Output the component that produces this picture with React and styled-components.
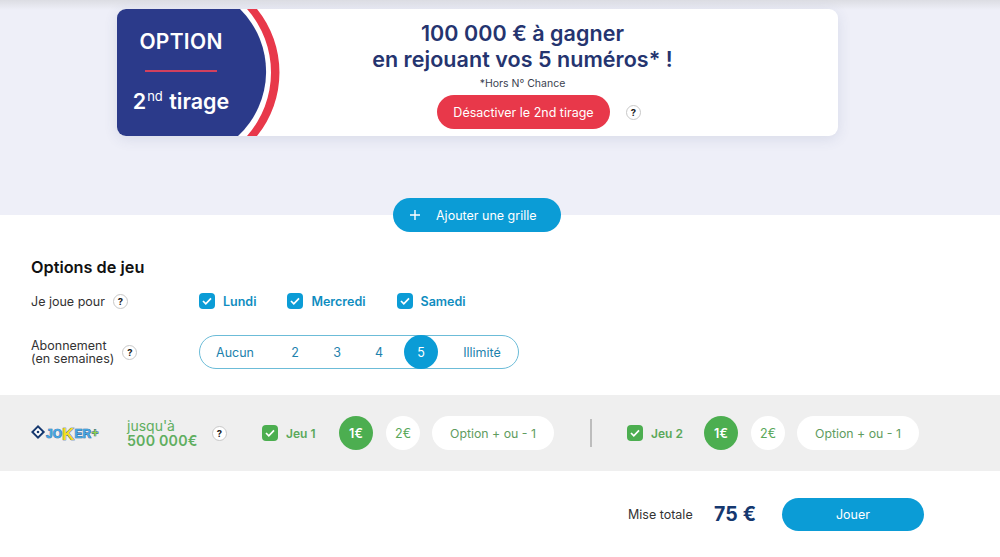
import React from "react";
import styled, { createGlobalStyle } from "styled-components";

const Global = createGlobalStyle`
  html, body { margin: 0; padding: 0; background: #fff; }
  body { font-family: Inter, "Open Sans", "Liberation Sans", sans-serif; width: 1000px; height: 557px; overflow: hidden; }
  * { box-sizing: border-box; }
`;

const Page = styled.div`display: flex; flex-direction: column; width: 1000px; height: 557px;`;
const Hero = styled.section`
  height: 215px; flex: none; padding: 9px 162px 0 117px;
  background: linear-gradient(#dcdde3 0, #eeeff8 10px, #eeeff8 100%);
`;
const Card = styled.div`
  position: relative; display: flex; height: 127px; border-radius: 9px; background: #fff;
  box-shadow: 0 3px 14px rgba(60, 70, 120, .12); overflow: hidden;
`;
const BadgeArt = styled.svg`position: absolute; left: 0; top: 0;`;
const Badge = styled.div`
  position: relative; width: 128px; margin-right: 35px; flex: none; display: flex; flex-direction: column;
  align-items: center; color: #fff; padding-top: 21px;
`;
const BadgeTitle = styled.div`font-size: 21px; font-weight: 600; line-height: 24px; letter-spacing: .3px;`;
const BadgeLine = styled.div`width: 72px; height: 2px; background: #d2405e; margin: 16px 0;`;
const BadgeSub = styled.div`
  font-size: 21.5px; font-weight: 600; line-height: 26px; white-space: nowrap;
  sup { font-size: 13px; font-weight: 400; line-height: 0; vertical-align: 8px; margin: 0 1px; }
`;
const CardBody = styled.div`flex: 1; display: flex; flex-direction: column; align-items: center; padding-top: 11px; margin-right: 73px;`;
const Headline = styled.h2`
  margin: 0; font-size: 21.5px; line-height: 26px; font-weight: 600; color: #25346f; text-align: center; letter-spacing: .05px; white-space: nowrap;
`;
const Note = styled.div`font-size: 10.5px; color: #3a3f50; line-height: 12px; margin-top: 6px;`;
const CardActions = styled.div`display: flex; align-items: center; margin-top: 5px; margin-right: -33px;`;
const RedButton = styled.button`
  width: 173px; height: 34px; border: 0; border-radius: 17px; background: #e8384a; color: #fff;
  font: 400 12.5px Inter, sans-serif; padding: 0;
`;
const HelpCircle = styled.span`
  display: inline-flex; align-items: center; justify-content: center; flex: none;
  width: 15px; height: 15px; border-radius: 50%; border: 1px solid #c8c8c8; background: #fff;
  color: #222; font-size: 9.5px; font-weight: 700; margin-left: ${p => p.$ml || 0}px;
`;
const AddWrap = styled.div`display: flex; justify-content: center; margin-top: -17px; padding-right: 46px; height: 34px; flex: none; position: relative;`;
const AddButton = styled.button`
  width: 168px; height: 34px; border: 0; border-radius: 17px; background: #0b9cd6; color: #fff;
  display: flex; align-items: center; padding: 0 0 0 16px; gap: 15px; font: 400 12.5px Inter, sans-serif;
`;
const Options = styled.section`padding: 26px 31px 0; height: 163px; flex: none;`;
const OptTitle = styled.h3`margin: 0 0 13px; font-size: 16.3px; line-height: 18px; font-weight: 600; color: #111;`;
const Row = styled.div`display: flex; align-items: center; height: ${p => p.$h}px; margin-bottom: ${p => p.$mb || 0}px;`;
const Label = styled.div`
  width: 168px; flex: none; display: flex; align-items: center; font-size: 12.5px; line-height: 13px; color: #333;
`;
const Checks = styled.div`display: flex; gap: 31px;`;
const Check = styled.label`
  display: flex; align-items: center; gap: 8px; font-size: 12.5px; font-weight: 600;
  color: ${p => p.$c};
`;
const Box = styled.span`
  width: 16px; height: 16px; border-radius: 4px; background: ${p => p.$c}; display: flex; align-items: center; justify-content: center; flex: none;
`;
const Pill = styled.div`
  width: 320px; height: 34px; border: 1px solid #6cbcd8; border-radius: 17px; display: flex; align-items: center;
  padding-left: 16px;
`;
const PillItem = styled.span`
  display: flex; align-items: center; justify-content: center; height: 34px; font-size: 12.5px; font-weight: 400;
  color: #1d82ad; width: ${p => p.$w}px; flex: none; margin-left: ${p => p.$ml || 0}px; white-space: nowrap;
  ${p => p.$on && "background:#0b9cd6;color:#fff;border-radius:50%;"}
`;
const JokerBar = styled.section`
  height: 76px; flex: none; background: #efefef; display: flex; align-items: center; padding-left: 31px;
`;
const JokerLogo = styled.svg`flex: none;`;
const LogoText = styled.text`
  font-family: "Liberation Sans", sans-serif; font-weight: 700; paint-order: stroke;
  stroke: #1b4c8f; stroke-width: .7px;
`;
const Prize = styled.div`
  width: 84px; margin-left: 26px; color: #5fae60; font-size: 14px; line-height: 15px; flex: none;
  strong { display: block; font-weight: 600; font-size: 14.2px; letter-spacing: .2px; white-space: nowrap; }
`;
const Game = styled.div`display: flex; align-items: center; margin-left: ${p => p.$ml}px;`;
const JeuLabel = styled.span`font-size: 12px; font-weight: 600; color: #5aa85a; margin-left: 8px; width: 41px; white-space: nowrap;`;
const Coin = styled.span`
  width: 34px; height: 34px; border-radius: 50%; flex: none; display: flex; align-items: center; justify-content: center;
  font-size: 12.5px; font-weight: ${p => p.$on ? 600 : 400};
  background: ${p => p.$on ? "#4cae50" : "#fff"}; color: ${p => p.$on ? "#fff" : "#5aa85a"};
  margin-left: ${p => p.$ml}px;
`;
const OptionBtn = styled.span`
  width: 122px; height: 34px; border-radius: 17px; background: #fff; color: #5f9c60; font-size: 12.3px; font-weight: 400;
  display: flex; align-items: center; justify-content: center; margin-left: 12px; flex: none;
`;
const Divider = styled.span`width: 2px; height: 28px; background: #bdbdbd; margin-left: 36px; flex: none;`;
const Footer = styled.footer`
  height: 86px; flex: none; display: flex; align-items: center; padding: 0 76px 0 628px;
`;
const Stake = styled.span`font-size: 12.5px; color: #333; width: 86px; flex: none;`;
const Total = styled.span`font-size: 19.5px; font-weight: 700; color: #15386f; width: 68px; flex: none; letter-spacing: .2px;`;
const Play = styled.button`
  width: 142px; height: 33px; border: 0; border-radius: 17px; background: #0b9cd6; color: #fff; font: 400 12.5px Inter, sans-serif;
`;

const Tick = () => (
  <svg width="10" height="8" viewBox="0 0 10 8" fill="none"><path d="M1 4l2.8 2.8L9 1.4" stroke="#fff" strokeWidth="1.7" /></svg>
);

export default function App() {
  return (
    <Page>
      <Global />
      <Hero>
        <Card>
          <BadgeArt width="165" height="127" viewBox="0 0 165 127">
            <path d="M130 0H140A101 101 0 0 1 140 127H130A96 96 0 0 0 130 0Z" fill="#e8384a" />
            <path d="M0 0H123A88 88 0 0 1 121 127H0Z" fill="#2b3a8a" />
          </BadgeArt>
          <Badge>
            <BadgeTitle>OPTION</BadgeTitle>
            <BadgeLine />
            <BadgeSub>2<sup>nd</sup> tirage</BadgeSub>
          </Badge>
          <CardBody>
            <Headline>100 000 € à gagner<br />en rejouant vos 5 numéros* !</Headline>
            <Note>*Hors N° Chance</Note>
            <CardActions>
              <RedButton>Désactiver le 2nd tirage</RedButton>
              <HelpCircle $ml={16}>?</HelpCircle>
            </CardActions>
          </CardBody>
        </Card>
      </Hero>
      <AddWrap>
        <AddButton>
          <svg width="12" height="12" viewBox="0 0 12 12"><path d="M6 1v10M1 6h10" stroke="#fff" strokeWidth="1.4" /></svg>
          Ajouter une grille
        </AddButton>
      </AddWrap>
      <Options>
        <OptTitle>Options de jeu</OptTitle>
        <Row $h={24} $mb={22}>
          <Label>Je joue pour<HelpCircle $ml={8}>?</HelpCircle></Label>
          <Checks>
            {["Lundi", "Mercredi", "Samedi"].map(d => (
              <Check key={d} $c="#0f8dc0"><Box $c="#0b9cd6"><Tick /></Box>{d}</Check>
            ))}
          </Checks>
        </Row>
        <Row $h={34}>
          <Label><span>Abonnement<br />(en semaines)</span><HelpCircle $ml={8}>?</HelpCircle></Label>
          <Pill>
            <PillItem $w={38}>Aucun</PillItem>
            <PillItem $w={42} $ml={20}>2</PillItem>
            <PillItem $w={42}>3</PillItem>
            <PillItem $w={42}>4</PillItem>
            <PillItem $w={34} $ml={4} $on>5</PillItem>
            <PillItem $w={38} $ml={25}>Illimité</PillItem>
          </Pill>
        </Row>
      </Options>
      <JokerBar>
        <JokerLogo width="70" height="20" viewBox="0 0 70 20" role="img" aria-label="Joker+">
          <rect x="3" y="5" width="8" height="8" transform="rotate(45 7 9)" fill="#fff" stroke="#17396f" strokeWidth="2" />
          <circle cx="7" cy="9" r="1.3" fill="#17396f" />
          <LogoText x="15" y="15" fontSize="12" fill="#45a6e0">JO</LogoText>
          <LogoText x="31" y="16.5" fontSize="17" fill="#f2dc1e">K</LogoText>
          <LogoText x="43.5" y="15" fontSize="12" fill="#45a6e0">ER</LogoText>
          <LogoText x="60.5" y="14" fontSize="12" fill="#8fd14a">+</LogoText>
        </JokerLogo>
        <Prize>jusqu'à<strong>500 000€</strong></Prize>
        <HelpCircle $ml={1}>?</HelpCircle>
        <Game $ml={35}>
          <Box $c="#4cae50"><Tick /></Box>
          <JeuLabel>Jeu 1</JeuLabel>
          <Coin $on $ml={12}>1€</Coin>
          <Coin $ml={13}>2€</Coin>
          <OptionBtn>Option + ou - 1</OptionBtn>
        </Game>
        <Divider />
        <Game $ml={35}>
          <Box $c="#4cae50"><Tick /></Box>
          <JeuLabel>Jeu 2</JeuLabel>
          <Coin $on $ml={12}>1€</Coin>
          <Coin $ml={13}>2€</Coin>
          <OptionBtn>Option + ou - 1</OptionBtn>
        </Game>
      </JokerBar>
      <Footer>
        <Stake>Mise totale</Stake>
        <Total>75 €</Total>
        <Play>Jouer</Play>
      </Footer>
    </Page>
  );
}
